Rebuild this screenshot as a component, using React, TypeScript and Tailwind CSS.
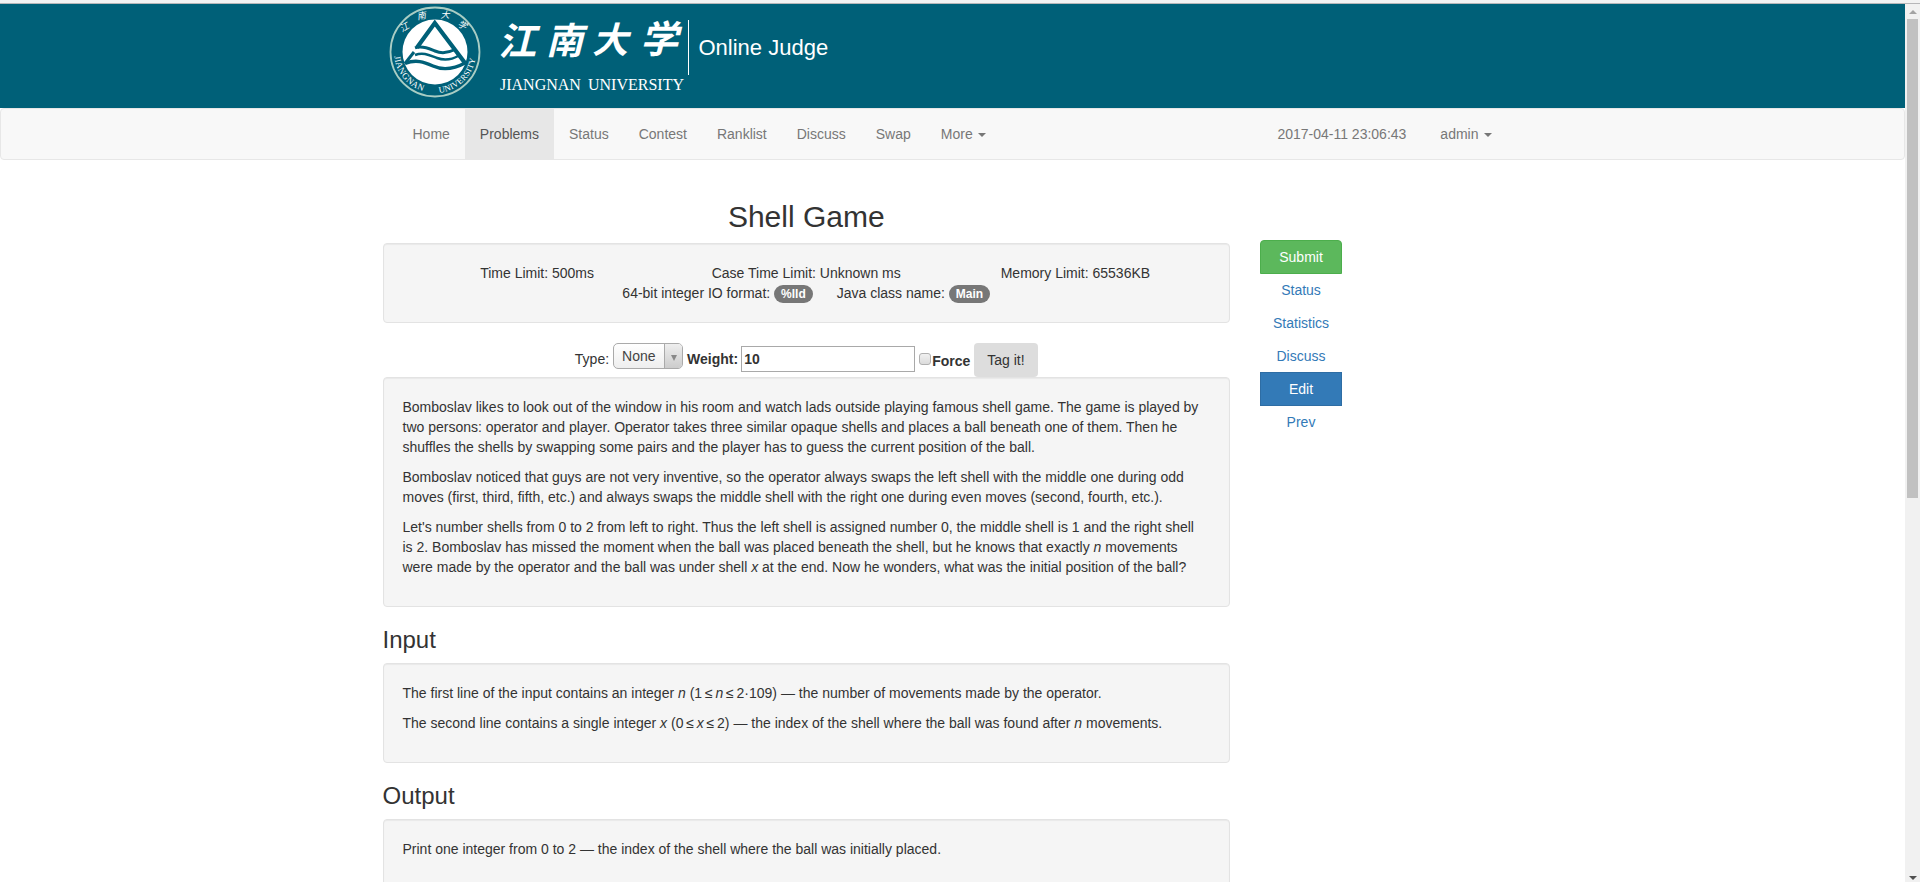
import type { ReactNode } from "react";

const navItems = ["Home", "Problems", "Status", "Contest", "Ranklist", "Discuss", "Swap"];

function Caret() {
  return <span className="ml-[5px] inline-block border-x-4 border-t-4 border-x-transparent border-t-current align-middle" />;
}

function Emblem() {
  return (
    <svg viewBox="0 -1 94 94" className="size-[94px]" role="img" aria-label="Jiangnan University emblem">
      <defs>
        <path id="ring-bottom" d="M8 47 A39 39 0 0 0 86 47" />
      </defs>
      <circle cx="47" cy="47" r="44.5" fill="none" stroke="#a9cdc4" strokeWidth="1.8" />
      <circle cx="47" cy="47" r="32.5" fill="#fff" />
      <g fill="none" stroke="#006078">
        <path d="M29 42.500 L46.800 18 L77 58" strokeWidth="4.2" />
        <path d="M26 47 L17 58.500" strokeWidth="3" />
        <path d="M27 42.800 C35 40 42 44 47 46 C54 49 61 47.500 67 44.500" strokeWidth="3" />
        <path d="M27 50 C36 46.500 43 51 49 53 C57 56 65 54 71 50.500" strokeWidth="2.600" />
        <path d="M17 58.500 C28 54 36 57 45 61 C56 66 68 63 78 57.500" strokeWidth="3.4" />
      </g>
      <g fill="#fff" fontFamily="'Noto Sans CJK SC', sans-serif" fontSize="9" fontStyle="italic" textAnchor="middle">
        <text x="18" y="25" transform="rotate(-30 18 25)">江</text>
        <text x="34" y="14" transform="rotate(-10 34 14)">南</text>
        <text x="57" y="13">大</text>
        <text x="73" y="23" transform="rotate(25 73 23)">学</text>
      </g>
      <g fill="#fff" fontFamily="'Liberation Serif', serif" dominantBaseline="middle">
        <text fontSize="9">
          <textPath href="#ring-bottom" startOffset="4">JIANGNAN</textPath>
        </text>
        <text fontSize="8.5">
          <textPath href="#ring-bottom" startOffset="65">UNIVERSITY</textPath>
        </text>
      </g>
    </svg>
  );
}

function Wordmark() {
  return (
    <svg viewBox="0 0 190 94" className="h-[94px] w-[190px]" role="img" aria-label="Jiangnan University">
      <g fill="#fff" fontFamily="'Noto Sans CJK SC', sans-serif" fontStyle="italic" fontWeight="700">
        <text x="0" y="51" fontSize="38">江</text>
        <text x="48" y="50" fontSize="37">南</text>
        <text x="94" y="49" fontSize="36">大</text>
        <text x="142" y="49" fontSize="38">学</text>
      </g>
      <g fill="#fff" fontFamily="'Liberation Serif', serif" fontSize="16">
        <text x="2" y="86">JIANGNAN</text>
        <text x="90" y="86">UNIVERSITY</text>
      </g>
    </svg>
  );
}

function Well({ children }: { children: ReactNode }) {
  return (
    <div className="rounded border border-[#e3e3e3] bg-[#f5f5f5] p-[19px] shadow-[inset_0_1px_1px_rgba(0,0,0,0.05)]">
      {children}
    </div>
  );
}

function Badge({ children }: { children: ReactNode }) {
  return (
    <span className="inline-block rounded-[10px] bg-[#777] px-[7px] py-[3px] text-center align-middle text-xs leading-3 font-bold text-white">
      {children}
    </span>
  );
}

function Section({ title, children }: { title: string; children: ReactNode }) {
  return (
    <section>
      <h3 className="mt-5 mb-[10px] text-2xl leading-[26px]">{title}</h3>
      <Well>{children}</Well>
    </section>
  );
}

function TagForm() {
  return (
    <form className="mt-5 flex h-[34px] items-start justify-center gap-1" onSubmit={(e) => e.preventDefault()}>
      <label htmlFor="type" className="pt-[6px]">Type:</label>
      <span className="relative inline-flex">
        <select
          id="type"
          className="h-[26px] w-[70px] appearance-none rounded-[5px] border border-[#aaa] bg-linear-to-b from-white to-[#eee] pl-2 text-[#444]"
        >
          <option>None</option>
        </select>
        <span className="pointer-events-none absolute inset-y-px right-px flex w-[18px] items-center justify-center rounded-r border-l border-[#aaa] bg-linear-to-b from-[#eee] to-[#ccc] pt-1">
          <span className="border-x-[3px] border-t-[6px] border-x-transparent border-t-[#888]" />
        </span>
      </span>
      <span className="flex gap-[3px]">
        <label htmlFor="weight" className="pt-[6px] font-bold">Weight:</label>
        <input
          id="weight"
          type="text"
          defaultValue="10"
          className="mt-[3px] h-[26px] w-[174px] border border-[#a9a9a9] bg-white px-[2px] font-bold"
        />
      </span>
      <label className="flex pt-2 font-bold">
        <input
          type="checkbox"
          className="mt-[2px] mr-px size-[12px] appearance-none rounded-[3px] border border-[#b0b0b0] bg-linear-to-b from-[#f0f0f0] to-[#dcdcdc]"
        />
        Force
      </label>
      <button type="submit" className="h-[34px] rounded bg-[#ddd] px-[13px]">Tag it!</button>
    </form>
  );
}

export default function App() {
  const side = "block border px-3 py-[6px]";
  return (
    <div className="flex h-screen flex-col overflow-hidden bg-white font-['Liberation_Sans',Arial,sans-serif] text-sm leading-5 text-[#333]">
      <div className="h-1 shrink-0 border-b border-[#b6b6b8] bg-[#f2f2f2]" />
      <div className="flex min-h-0 flex-1">
        <div className="min-w-0 flex-1 overflow-hidden">
          <header className="h-[104px] bg-[#006078]">
            <div className="mx-auto flex max-w-[1170px] px-5">
              <Emblem />
              <div className="ml-4 flex">
                <Wordmark />
                <div className="mt-4 h-[55px] w-px bg-white" />
                <h1 className="mt-8 ml-[10px] text-[22px] leading-6 text-white">Online Judge</h1>
              </div>
            </div>
          </header>

          <nav className="rounded border border-[#e7e7e7] bg-[#f8f8f8] text-[#777]">
            <div className="mx-auto flex max-w-[1170px] justify-between px-[30px]">
              <div className="flex">
                {navItems.map((item) => (
                  <a
                    key={item}
                    href="#"
                    className={item === "Problems" ? "bg-[#e7e7e7] p-[15px] text-[#555]" : "p-[15px]"}
                  >
                    {item}
                  </a>
                ))}
                <a href="#" className="p-[15px]">More<Caret /></a>
              </div>
              <div className="flex">
                <span className="py-[15px] pr-[19px]">2017-04-11 23:06:43</span>
                <a href="#" className="py-[15px] pr-4 pl-[15px]">admin<Caret /></a>
              </div>
            </div>
          </nav>

          <div className="mx-auto mt-5 flex max-w-[1170px]">
            <main className="w-3/4 px-[15px] pt-5">
              <h2 className="mb-[10px] text-center text-3xl leading-[33px]">Shell Game</h2>
              <Well>
                <div className="grid grid-cols-3 text-center">
                  <div>Time Limit: 500ms</div>
                  <div>Case Time Limit: Unknown ms</div>
                  <div>Memory Limit: 65536KB</div>
                </div>
                <div className="flex h-5 items-center justify-center gap-6">
                  <span>64-bit integer IO format: <Badge>%lld</Badge></span>
                  <span>Java class name: <Badge>Main</Badge></span>
                </div>
              </Well>
              <TagForm />
              <Well>
                <p className="mb-[10px]">
                  Bomboslav likes to look out of the window in his room and watch lads outside playing famous shell game. The
                  game is played by two persons: operator and player. Operator takes three similar opaque shells and places a
                  ball beneath one of them. Then he shuffles the shells by swapping some pairs and the player has to guess the
                  current position of the ball.
                </p>
                <p className="mb-[10px]">
                  Bomboslav noticed that guys are not very inventive, so the operator always swaps the left shell with the
                  middle one during odd moves (first, third, fifth, etc.) and always swaps the middle shell with the right one
                  during even moves (second, fourth, etc.).
                </p>
                <p className="mb-[10px]">
                  Let's number shells from 0 to 2 from left to right. Thus the left shell is assigned number 0, the middle
                  shell is 1 and the right shell is{"\u00a0"}2. Bomboslav has missed the moment when the ball was placed
                  beneath the shell, but he knows that exactly <i>n</i> movements were made by the operator and the ball was
                  under shell <i>x</i> at the end. Now he wonders, what was the initial position of the ball?
                </p>
              </Well>
              <Section title="Input">
                <p className="mb-[10px]">
                  The first line of the input contains an integer <i>n</i> (1{"\u2009"}≤{"\u2009"}<i>n</i>{"\u2009"}≤{"\u2009"}
                  2·109) — the number of movements made by the operator.
                </p>
                <p className="mb-[10px]">
                  The second line contains a single integer <i>x</i> (0{"\u2009"}≤{"\u2009"}<i>x</i>{"\u2009"}≤{"\u2009"}2) —
                  the index of the shell where the ball was found after <i>n</i> movements.
                </p>
              </Section>
              <Section title="Output">
                <p className="mb-[10px]">
                  Print one integer from 0 to 2 — the index of the shell where the ball was initially placed.
                </p>
              </Section>
            </main>

            <aside className="w-1/4 px-[15px] pt-[60px]">
              <div className="inline-flex flex-col -space-y-px text-center text-[#337ab7]">
                <a href="#" className={`${side} rounded-t border-[#4cae4c] bg-[#5cb85c] text-white`}>Submit</a>
                <a href="#" className={`${side} border-transparent`}>Status</a>
                <a href="#" className={`${side} border-transparent`}>Statistics</a>
                <a href="#" className={`${side} border-transparent`}>Discuss</a>
                <a href="#" className={`${side} border-[#2e6da4] bg-[#337ab7] text-white`}>Edit</a>
                <a href="#" className={`${side} border-transparent`}>Prev</a>
              </div>
            </aside>
          </div>
        </div>

        <div className="flex w-[15px] shrink-0 flex-col items-center bg-[#f1f1f1]" aria-hidden="true">
          <div className="flex h-[15px] shrink-0 items-center">
            <span className="border-x-4 border-b-4 border-x-transparent border-b-[#a3a3a3]" />
          </div>
          <div className="flex w-[11px] flex-1 flex-col">
            <div className="h-[56.5%] bg-[#c1c1c1]" />
          </div>
          <div className="flex h-[15px] shrink-0 items-end pb-[2px]">
            <span className="border-x-4 border-t-4 border-x-transparent border-t-[#505050]" />
          </div>
        </div>
      </div>
    </div>
  );
}
